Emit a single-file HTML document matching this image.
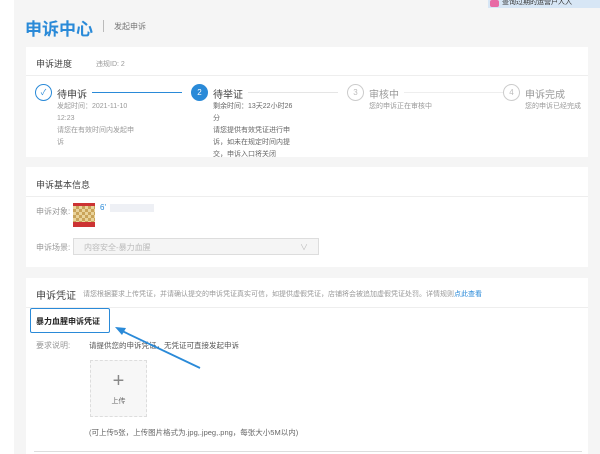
<!DOCTYPE html>
<html><head><meta charset="utf-8"><style>
*{margin:0;padding:0;box-sizing:border-box}
body{width:600px;height:454px;overflow:hidden;background:#fff;font-family:"Liberation Sans","Noto Sans CJK SC",sans-serif;position:relative;color:#333}
.bg{position:absolute;left:14px;top:0;width:586px;height:454px;background:#f5f5f5}
.a{position:absolute;white-space:nowrap}
.card{position:absolute;left:26px;width:562px;background:#fff}
.g{color:#999;font-size:7px}
.line{position:absolute;height:1px;background:#eee}
.circ{position:absolute;width:17px;height:17px;border-radius:50%;border:1px solid #ccc;color:#bbb;font-size:8px;text-align:center;line-height:15px;background:#fff}
</style></head><body>
<div class="bg"></div>
<div class="a" style="left:488px;top:0;width:112px;height:8px;background:#d7e6f5;font-size:7px;line-height:6px;color:#333;padding-left:14px">查询过期的运营户人入
<div style="position:absolute;left:2px;top:0;width:9px;height:7px;background:#e86aa5;border-radius:2px"></div></div>
<div class="a" style="left:25px;top:15px;font-size:17px;font-weight:bold;color:#2a8ad8">申诉中心</div>
<div class="a" style="left:103px;top:20px;width:1px;height:12px;background:#bbb"></div>
<div class="a" style="left:114px;top:21px;font-size:8px;color:#777">发起申诉</div>

<div class="card" style="top:47px;height:110px">
 <div class="a" style="left:10px;top:10px;font-size:9px;color:#444">申诉进度</div>
 <div class="a g" style="left:70px;top:12px">违规ID: 2</div>
 <div class="line" style="left:0;top:28px;width:562px"></div>
 <div class="circ" style="left:9px;top:37px;border-color:#2a8ad8;color:#2a8ad8">✓</div>
 <div class="a" style="left:31px;top:39px;font-size:10px;color:#444">待申诉</div>
 <div class="a" style="left:66px;top:45px;width:90px;height:1px;background:#2a8ad8"></div>
 <div class="a g" style="left:31px;top:54px;line-height:12px">发起时间：2021-11-10<br>12:23<br>请您在有效时间内发起申<br>诉</div>
 <div class="circ" style="left:165px;top:37px;background:#2a8ad8;border-color:#2a8ad8;color:#fff">2</div>
 <div class="a" style="left:187px;top:39px;font-size:10px;color:#444">待举证</div>
 <div class="a" style="left:222px;top:45px;width:90px;height:1px;background:#e5e5e5"></div>
 <div class="a" style="left:187px;top:54px;line-height:12px;font-size:7px;color:#666">剩余时间：13天22小时26<br>分<br>请您提供有效凭证进行申<br>诉，如未在规定时间内提<br>交，申诉入口将关闭</div>
 <div class="circ" style="left:321px;top:37px">3</div>
 <div class="a" style="left:343px;top:39px;font-size:10px;color:#999">审核中</div>
 <div class="a" style="left:378px;top:45px;width:100px;height:1px;background:#eee"></div>
 <div class="a g" style="left:343px;top:54px">您的申诉正在审核中</div>
 <div class="circ" style="left:477px;top:37px">4</div>
 <div class="a" style="left:499px;top:39px;font-size:10px;color:#999">申诉完成</div>
 <div class="a g" style="left:499px;top:54px">您的申诉已经完成</div>
</div>

<div class="card" style="top:167px;height:100px">
 <div class="a" style="left:10px;top:11px;font-size:9px;color:#444">申诉基本信息</div>
 <div class="line" style="left:0;top:29px;width:562px"></div>
 <div class="a g" style="left:10px;top:39px;font-size:8px">申诉对象:</div>
 <div class="a" style="left:47px;top:36px;width:22px;height:24px;background:repeating-conic-gradient(#c9a45a 0 25%,#e9d39a 0 50%) 0 0/6px 6px;border-top:3px solid #c33;border-bottom:5px solid #c33"></div>
 <div class="a" style="left:74px;top:36px;font-size:8px;color:#2a8ad8">6'</div>
 <div class="a" style="left:84px;top:37px;width:44px;height:8px;background:#eef0f5"></div>
 <div class="a g" style="left:10px;top:75px;font-size:8px">申诉场景:</div>
 <div class="a" style="left:47px;top:71px;width:246px;height:17px;border:1px solid #ddd;background:#f5f5f5;font-size:8px;color:#bbb;padding:3px 10px">内容安全-暴力血腥<span style="position:absolute;right:10px">∨</span></div>
</div>

<div class="card" style="top:278px;height:176px">
 <div class="a" style="left:10px;top:9px;font-size:10px;color:#444">申诉凭证</div>
 <div class="a g" style="left:57px;top:11px">请您根据要求上传凭证，并请确认提交的申诉凭证真实可信，如提供虚假凭证，店铺将会被追加虚假凭证处罚。详情规则<span style="color:#2a8ad8">点此查看</span></div>
 <div class="line" style="left:0;top:29px;width:562px"></div>
 <div class="a g" style="left:10px;top:62px;font-size:8px">要求说明:</div>
 <div class="a" style="left:63px;top:62px;font-size:7.5px;color:#555">请提供您的申诉凭证，无凭证可直接发起申诉</div>
 <div class="a" style="left:64px;top:82px;width:57px;height:57px;border:1px dashed #ddd;background:#f7f7f7;text-align:center">
  <div style="font-size:20px;color:#888;line-height:20px;margin-top:10px">+</div>
  <div style="font-size:7px;color:#666;margin-top:5px">上传</div></div>
 <div class="a" style="left:63px;top:149px;font-size:7.5px;color:#666">(可上传5张，上传图片格式为.jpg,.jpeg,.png，每张大小5M以内)</div>
 <div class="line" style="left:8px;top:173px;width:548px;background:#ddd"></div>
</div>
<div class="a" style="left:30px;top:308px;width:80px;height:25px;border:1.5px solid #2a8ad8;border-radius:2px;background:#fff;font-size:8px;font-weight:bold;color:#222;padding:7px 0 0 5px">暴力血腥申诉凭证</div>
<svg class="a" style="left:0;top:0" width="600" height="454"><line x1="200" y1="368" x2="120" y2="330" stroke="#2a8ad8" stroke-width="1.8"/><polygon points="115,327 126,328 122,335" fill="#2a8ad8"/></svg>
</body></html>
